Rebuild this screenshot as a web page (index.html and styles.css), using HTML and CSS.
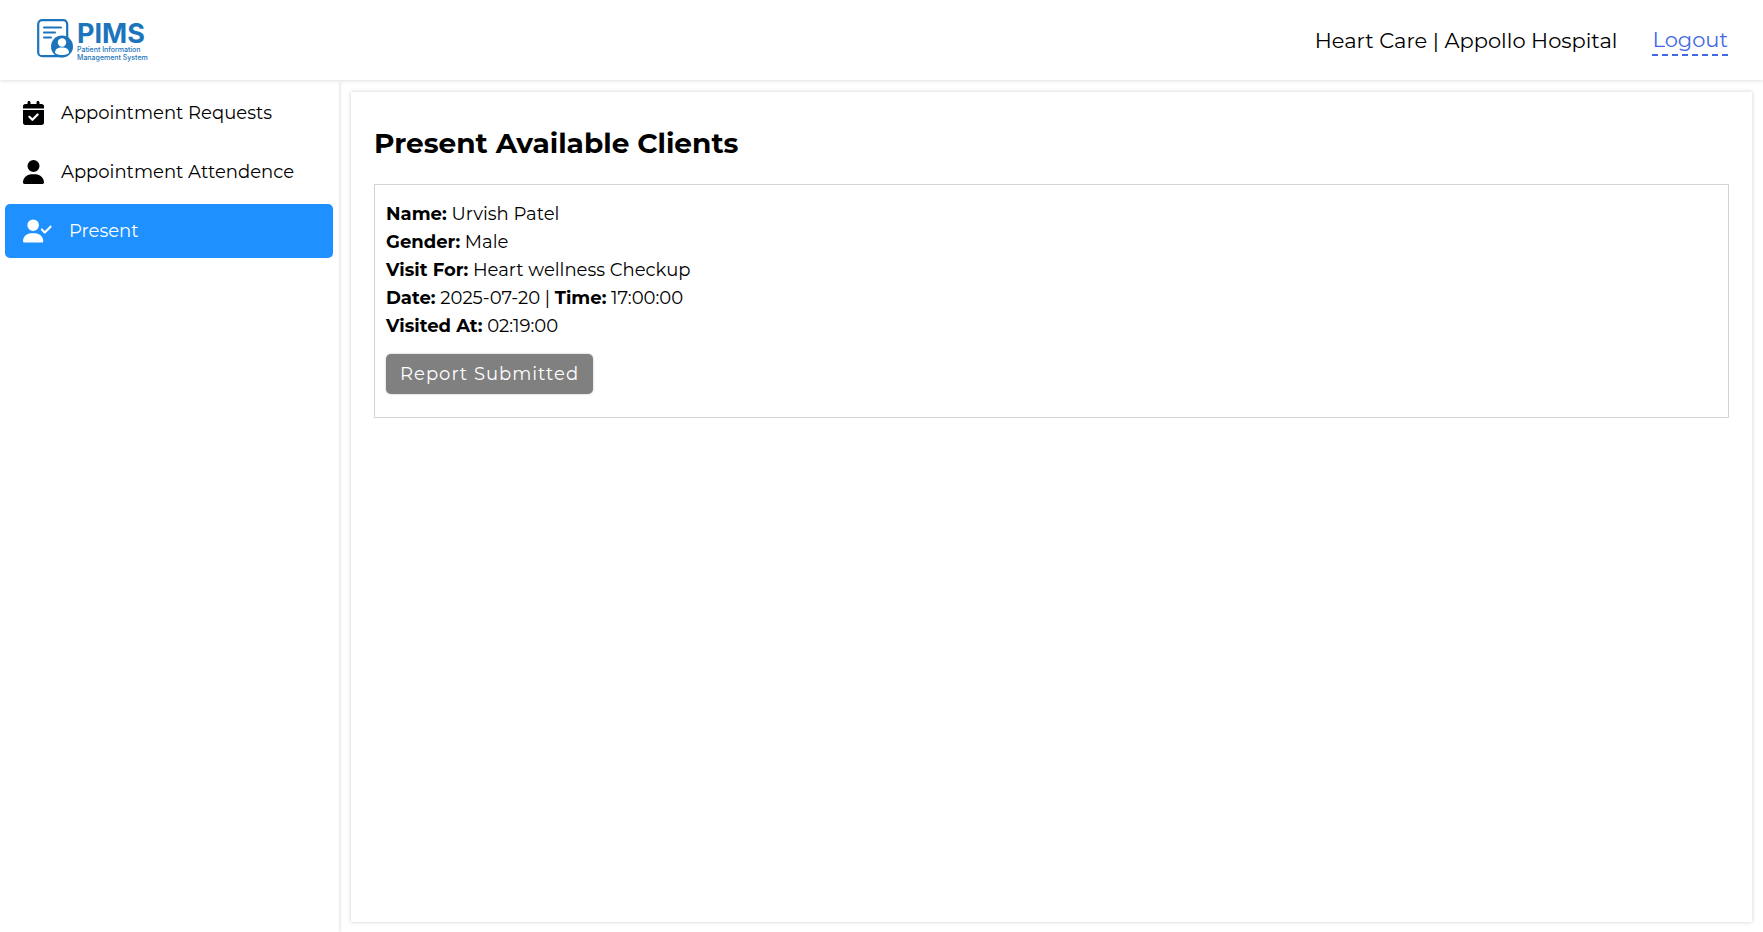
FILE: index.html
```html
<!DOCTYPE html>
<html lang="en">
<head>
<meta charset="utf-8">
<title>PIMS</title>
<link rel="stylesheet" href="styles.css">
</head>
<body>
<header class="header">
  <a class="logo" href="#">
    <svg class="logo-mark" viewBox="0 0 36 39" aria-hidden="true">
      <rect x="1.200" y="1.200" width="29" height="36" rx="4" fill="#fff" stroke="#1c75bc" stroke-width="2.200"/>
      <path d="M7 8.500h17M7 13.500h11M7 18.500h7" stroke="#1c75bc" stroke-width="2" stroke-linecap="round"/>
      <circle cx="25" cy="27.500" r="11" fill="#1c75bc"/>
      <circle cx="25" cy="23.500" r="4.200" fill="#fff"/>
      <path d="M18 34c0-3.800 2.600-5.500 7-5.500s7 1.700 7 5.500c-3.600 2.800-10.400 2.800-14 0z" fill="#fff"/>
    </svg>
    <span class="logo-text">
      <span class="logo-name">PIMS</span>
      <span class="logo-sub">Patient Information</span>
      <span class="logo-sub">Management System</span>
    </span>
  </a>
  <div class="account">
    <span>Heart Care | Appollo Hospital</span>
    <a class="logout" href="#">Logout</a>
  </div>
</header>
<div class="layout">
  <nav class="sidebar">
    <a class="nav-item" href="#">
      <svg class="icon" viewBox="0 0 448 512" aria-hidden="true"><path d="M128 0c17.700 0 32 14.300 32 32V64H288V32c0-17.700 14.300-32 32-32s32 14.300 32 32V64h48c26.500 0 48 21.500 48 48v48H0V112C0 85.500 21.500 64 48 64H96V32c0-17.700 14.300-32 32-32zM0 192H448V464c0 26.500-21.500 48-48 48H48c-26.500 0-48-21.500-48-48V192zM329 305c9.400-9.400 9.400-24.600 0-33.900s-24.600-9.400-33.900 0l-95 95-47-47c-9.400-9.400-24.600-9.400-33.900 0s-9.400 24.600 0 33.900l64 64c9.400 9.400 24.600 9.400 33.900 0L329 305z"/></svg>
      <span>Appointment Requests</span>
    </a>
    <a class="nav-item" href="#">
      <svg class="icon" viewBox="0 0 448 512" aria-hidden="true"><path d="M224 256A128 128 0 1 0 224 0a128 128 0 1 0 0 256zm-45.700 48C79.800 304 0 383.800 0 482.300C0 498.700 13.300 512 29.700 512H418.300c16.400 0 29.700-13.300 29.700-29.700C448 383.800 368.200 304 269.700 304H178.300z"/></svg>
      <span>Appointment Attendence</span>
    </a>
    <a class="nav-item active" href="#" aria-current="page">
      <svg class="icon icon-wide" viewBox="0 0 640 512" aria-hidden="true"><path d="M96 128a128 128 0 1 1 256 0A128 128 0 1 1 96 128zM0 482.300C0 383.800 79.800 304 178.300 304h91.400C368.200 304 448 383.800 448 482.300c0 16.400-13.300 29.700-29.700 29.700H29.700C13.300 512 0 498.700 0 482.300zM625 177L497 305c-9.400 9.400-24.600 9.400-33.900 0l-64-64c-9.400-9.400-9.400-24.600 0-33.900s24.600-9.400 33.900 0l47 47L591 143c9.400-9.400 24.600-9.400 33.900 0s9.400 24.600 0 33.900z"/></svg>
      <span>Present</span>
    </a>
  </nav>
  <main class="panel">
    <h1 class="title">Present Available Clients</h1>
    <section class="client">
      <p><strong>Name:</strong> Urvish Patel</p>
      <p><strong>Gender:</strong> Male</p>
      <p><strong>Visit For:</strong> Heart wellness Checkup</p>
      <p><strong>Date:</strong> 2025-07-20 | <strong>Time:</strong> 17:00:00</p>
      <p><strong>Visited At:</strong> 02:19:00</p>
      <button class="report" type="button">Report Submitted</button>
    </section>
  </main>
</div>
</body>
</html>
```

FILE: styles.css
```css
* {
  box-sizing: border-box;
  margin: 0;
  padding: 0;
}

body {
  display: flex;
  flex-direction: column;
  min-height: 100vh;
  background: #fff;
  color: #000;
  font-family: Montserrat, Inter, "Open Sans", sans-serif;
  font-size: 18px;
  line-height: 28px;
}

a {
  color: inherit;
  text-decoration: none;
}

.header {
  display: flex;
  align-items: center;
  justify-content: space-between;
  height: 80px;
  padding: 0 35px 0 37px;
  box-shadow: 0 0 4px rgba(0, 0, 0, 0.2);
}

.logo {
  display: flex;
  align-items: center;
  gap: 4px;
  padding-bottom: 4px;
  color: #1c75bc;
  font-family: Inter, sans-serif;
}

.logo-mark {
  width: 36px;
  height: 39px;
}

.logo-text {
  display: flex;
  flex-direction: column;
  padding-top: 6px;
}

.logo-name {
  font-size: 27px;
  font-weight: 700;
  line-height: 25px;
}

.logo-sub {
  font-size: 7px;
  font-weight: 500;
  line-height: 8px;
}

.account {
  display: flex;
  align-items: center;
  gap: 35px;
  padding-top: 2px;
  font-size: 21px;
}

.logout {
  border-bottom: 2px dashed #4169e1;
  color: #4169e1;
}

.layout {
  display: flex;
  flex: 1;
}

.sidebar {
  display: flex;
  flex-direction: column;
  gap: 5px;
  width: 339px;
  padding: 6px 6px 6px 5px;
  box-shadow: 0 0 4px rgba(0, 0, 0, 0.2);
  clip-path: inset(2px -4px 0 0);
}

.nav-item {
  display: flex;
  align-items: center;
  gap: 17px;
  height: 54px;
  padding: 0 18px;
  border-radius: 5px;
}

.nav-item.active {
  background: #1e90ff;
  color: #fff;
}

.icon {
  width: 21px;
  height: 24px;
  fill: currentColor;
}

.icon-wide {
  width: 29px;
}

.panel {
  flex: 1;
  margin: 12px 11px 10px 12px;
  padding: 34px 23px;
  box-shadow: 0 0 4px rgba(0, 0, 0, 0.2);
}

.title {
  margin-bottom: 24px;
  font-size: 28px;
  font-weight: 700;
  line-height: 34px;
}

.client {
  padding: 15px 11px 23px;
  border: 1px solid #d3d3d3;
}

.report {
  margin-top: 14px;
  padding: 6px 14px;
  border: 0;
  border-radius: 5px;
  background: #808080;
  box-shadow: 0 0 2px rgba(0, 0, 0, 0.3);
  color: #fff;
  font: inherit;
  letter-spacing: 1px;
}
```
